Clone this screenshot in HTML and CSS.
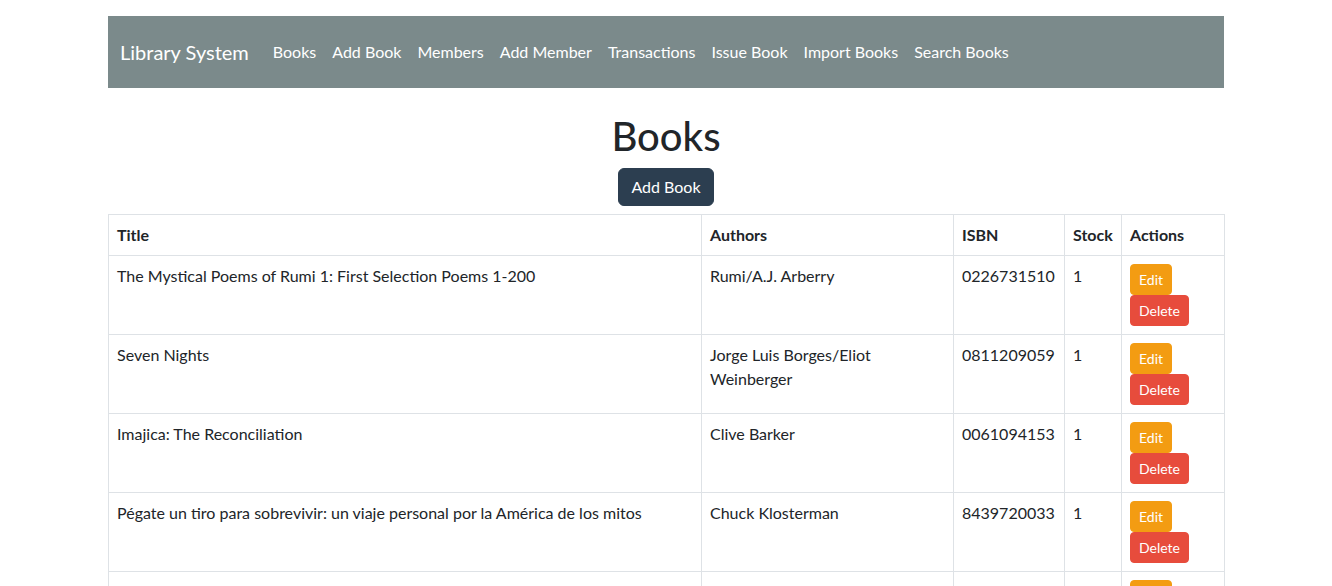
FILE: index.html
```html
<!DOCTYPE html>
<html lang="en">
<head>
<meta charset="utf-8">
<title>Library System</title>
<link rel="stylesheet" href="styles.css">
</head>
<body>
<div class="container">
  <nav class="navbar">
    <a class="brand" href="#">Library System</a>
    <ul class="nav">
      <li><a href="#">Books</a></li>
      <li><a href="#">Add Book</a></li>
      <li><a href="#">Members</a></li>
      <li><a href="#">Add Member</a></li>
      <li><a href="#">Transactions</a></li>
      <li><a href="#">Issue Book</a></li>
      <li><a href="#">Import Books</a></li>
      <li><a href="#">Search Books</a></li>
    </ul>
  </nav>
  <h1 class="page-title">Books</h1>
  <div class="center"><a class="btn btn-primary" href="#">Add Book</a></div>
  <table class="table">
    <colgroup>
      <col class="c-title"><col class="c-authors"><col class="c-isbn"><col class="c-stock"><col class="c-actions">
    </colgroup>
    <thead>
      <tr><th>Title</th><th>Authors</th><th>ISBN</th><th>Stock</th><th>Actions</th></tr>
    </thead>
    <tbody>
      <tr>
        <td>The Mystical Poems of Rumi 1: First Selection Poems 1-200</td>
        <td>Rumi/A.J. Arberry</td>
        <td>0226731510</td>
        <td>1</td>
        <td><a class="btn btn-sm btn-warning" href="#">Edit</a> <a class="btn btn-sm btn-danger" href="#">Delete</a></td>
      </tr>
      <tr>
        <td>Seven Nights</td>
        <td>Jorge Luis Borges/Eliot Weinberger</td>
        <td>0811209059</td>
        <td>1</td>
        <td><a class="btn btn-sm btn-warning" href="#">Edit</a> <a class="btn btn-sm btn-danger" href="#">Delete</a></td>
      </tr>
      <tr>
        <td>Imajica: The Reconciliation</td>
        <td>Clive Barker</td>
        <td>0061094153</td>
        <td>1</td>
        <td><a class="btn btn-sm btn-warning" href="#">Edit</a> <a class="btn btn-sm btn-danger" href="#">Delete</a></td>
      </tr>
      <tr>
        <td>Pégate un tiro para sobrevivir: un viaje personal por la América de los mitos</td>
        <td>Chuck Klosterman</td>
        <td>8439720033</td>
        <td>1</td>
        <td><a class="btn btn-sm btn-warning" href="#">Edit</a> <a class="btn btn-sm btn-danger" href="#">Delete</a></td>
      </tr>
      <tr>
        <td>The Gettysburg Address</td>
        <td>Abraham Lincoln/Michael McCurdy</td>
        <td>0395883970</td>
        <td>1</td>
        <td><a class="btn btn-sm btn-warning" href="#">Edit</a> <a class="btn btn-sm btn-danger" href="#">Delete</a></td>
      </tr>
    </tbody>
  </table>
</div>
</body>
</html>
```

FILE: styles.css
```css
* { box-sizing: border-box; }
html { font-size: 16px; }
body {
  margin: 0;
  font-family: Lato, "Noto Sans", sans-serif;
  font-size: 16px;
  line-height: 1.5;
  color: #212529;
  background: #fff;
}
a { text-decoration: none; }
.container {
  width: 1140px;
  margin: 16px auto 0;
  padding: 0 12px;
}
.navbar {
  display: flex;
  align-items: center;
  background: #7b8a8b;
  padding: 16px 12px;
}
.brand {
  color: #fff;
  font-size: 20px;
  line-height: 30px;
  padding: 5px 0;
  margin-right: 16px;
}
.nav {
  display: flex;
  list-style: none;
  margin: 0;
  padding: 0;
}
.nav a {
  display: block;
  color: #fff;
  padding: 8px;
}
.page-title {
  text-align: center;
  font-size: 40px;
  font-weight: 500;
  line-height: 1.2;
  margin: 24px 0 8px;
}
.center { text-align: center; }
.btn {
  display: inline-block;
  border: 1px solid transparent;
  border-radius: 6px;
  color: #fff;
  padding: 6px 12px;
  font-size: 16px;
  line-height: 24px;
}
.btn-primary { background: #2c3e50; border-color: #2c3e50; }
.btn-sm {
  padding: 4px 8px;
  font-size: 14px;
  line-height: 21px;
  border-radius: 4px;
}
.btn-warning { background: #f39c12; border-color: #f39c12; }
.btn-danger { background: #e74c3c; border-color: #e74c3c; }
.table {
  width: 100%;
  margin-top: 8px;
  border-collapse: collapse;
  table-layout: fixed;
}
.table th, .table td {
  border: 1px solid #dee2e6;
  padding: 8px;
  text-align: left;
  vertical-align: top;
}
.table th { font-weight: 700; }
.c-title { width: 593px; }
.c-authors { width: 252px; }
.c-isbn { width: 111px; }
.c-stock { width: 57px; }
.c-actions { width: 103px; }
```
